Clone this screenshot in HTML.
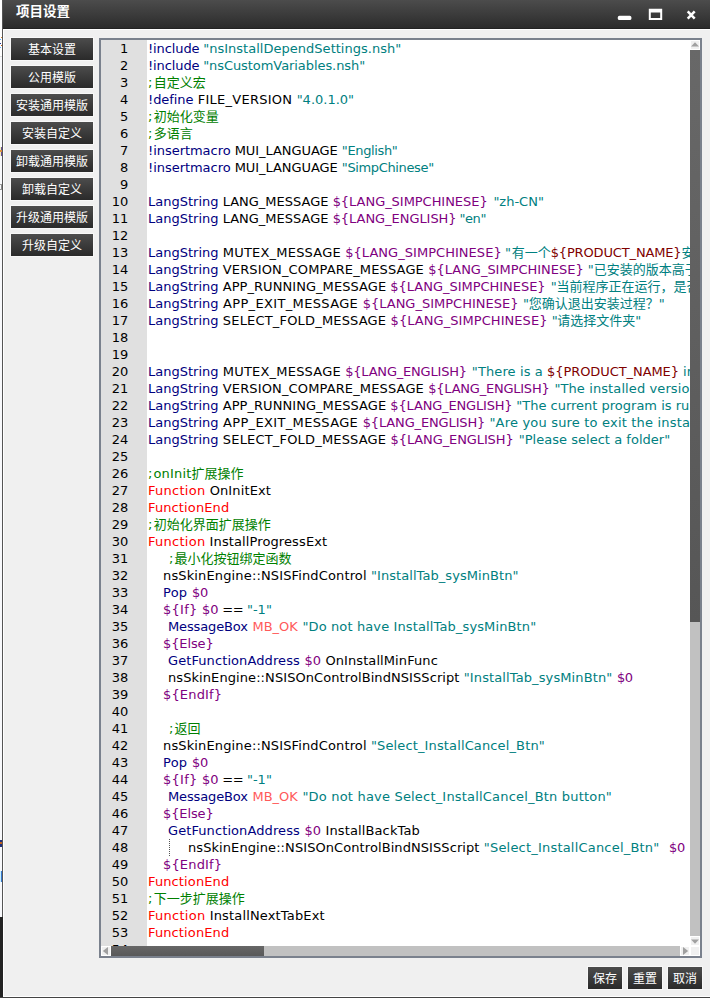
<!DOCTYPE html>
<html lang="zh-CN"><head><meta charset="utf-8"><title>项目设置</title>
<style>
html,body{margin:0;padding:0}
body{width:710px;height:998px;overflow:hidden;background:#f0f0f0;position:relative;font-family:"DejaVu Sans","Liberation Sans","Noto Sans CJK SC",sans-serif}
.abs{position:absolute}
#title{left:3px;top:0;width:707px;height:29px;background:linear-gradient(#4c4c4c,#2c2c2c 95%,#1e1e1e)}
#title .t{position:absolute;left:13px;top:2px;font:bold 13.5px/20px "Liberation Sans","Noto Sans CJK SC",sans-serif;color:#fff}
.sb{position:absolute;left:11px;width:82px;height:22px;background:linear-gradient(#4c4c4c,#2a2a2a);box-shadow:0 0 0 1px #f8f8f8;color:#fff;font:400 12px/24px "Liberation Sans","Noto Sans CJK SC",sans-serif;text-align:center;overflow:hidden}
.bb{position:absolute;top:967px;width:34px;height:22px;background:linear-gradient(#4c4c4c,#2a2a2a);box-shadow:0 0 0 1px #f8f8f8;color:#fff;font:400 12px/24px "Liberation Sans","Noto Sans CJK SC",sans-serif;text-align:center;overflow:hidden}
#ed{left:99px;top:38px;width:599px;height:916px;border:2px solid #7a818d;background:#fff;overflow:hidden}
#gut{left:0;top:0;width:46px;height:906px;background:#e0e0e0}
#code{left:0;top:0;width:589px;height:906px;overflow:hidden}
.l{position:absolute;left:0;height:17px;font-size:13px;line-height:17px;white-space:pre;color:#000}
.l .cj{font-family:"Noto Sans CJK SC",sans-serif;font-size:13px;line-height:0}
.n{position:absolute;left:0;width:27.4px;text-align:right;height:17px;font-size:13px;line-height:17px;color:#000}
.sbtn{width:10px;height:10px;box-sizing:border-box;background:#f0f0f0;border:1px solid #fff}
.k{color:#000080}.s{color:#008080}.v{color:#800080}.r{color:#800000}.f{color:#ff0000}.c{color:#008000}.m{color:#ff5a5a}
</style></head>
<body>
<div class="abs" style="left:0;top:0;width:2px;height:917px;background:#fff"></div>
<div class="abs" style="left:0;top:57px;width:2px;height:860px;background:#f8f9fc"></div>
<div class="abs" style="left:2px;top:0;width:1px;height:917px;background:#555"></div>
<div class="abs" style="left:0;top:917px;width:3px;height:81px;background:#232323"></div>
<div class="abs" style="left:1px;top:37px;width:1px;height:1px;background:#d08030"></div>
<div class="abs" style="left:0px;top:39px;width:1px;height:1px;background:#60b0ff"></div>
<div class="abs" style="left:0px;top:43px;width:1px;height:1px;background:#203090"></div>
<div class="abs" style="left:1px;top:45px;width:1px;height:1px;background:#c06020"></div>
<div class="abs" style="left:0px;top:47px;width:1px;height:1px;background:#60b0ff"></div>
<div class="abs" style="left:0px;top:56px;width:2px;height:1px;background:#ddd"></div>
<div class="abs" style="left:0px;top:147px;width:1px;height:9px;background:#f2f0b0"></div>
<div class="abs" style="left:1px;top:147px;width:1px;height:9px;background:#6a4fa0"></div>
<div class="abs" style="left:0px;top:150px;width:2px;height:2px;background:#e09040"></div>
<div class="abs" style="left:0px;top:184px;width:2px;height:1px;background:#999"></div>
<div class="abs" style="left:1px;top:185px;width:1px;height:4px;background:#8a8a8a"></div>
<div class="abs" style="left:0px;top:189px;width:2px;height:1px;background:#999"></div>
<div class="abs" style="left:0px;top:840px;width:2px;height:7px;background:#20307a"></div>
<div class="abs" style="left:0px;top:842px;width:2px;height:2px;background:#c06020"></div>
<div class="abs" style="left:0px;top:871px;width:2px;height:11px;background:#c8f0ff"></div>
<div class="abs" style="left:1px;top:871px;width:1px;height:11px;background:#3a7ad0"></div>
<div class="abs" style="left:3px;top:29px;width:1px;height:968px;background:#fff"></div>
<div class="abs" style="left:3px;top:29px;width:707px;height:1px;background:#fff"></div>
<div class="abs" style="left:3px;top:996px;width:707px;height:1px;background:#fff"></div>
<div class="abs" style="left:0;top:997px;width:710px;height:1px;background:#444"></div>
<div id="title" class="abs"><span class="t">项目设置</span>
<svg class="abs" style="left:0;top:0" width="707" height="28" viewBox="3 0 707 28"><rect x="617.8" y="15.8" width="13.6" height="4.2" rx="1.6" fill="#fff"/><path fill="#fff" fill-rule="evenodd" d="M648.8 8.8h13.4v11.2h-13.4z M650.8 12.6h9.4v5.3h-9.4z"/><path d="M687.7 11.4 L694.7 18.6 M694.7 11.4 L687.7 18.6" stroke="#fff" stroke-width="2.5" fill="none"/></svg></div>
<div class="sb" style="top:38px">基本设置</div>
<div class="sb" style="top:66px">公用模版</div>
<div class="sb" style="top:94px">安装通用模版</div>
<div class="sb" style="top:122px">安装自定义</div>
<div class="sb" style="top:150px">卸载通用模版</div>
<div class="sb" style="top:178px">卸载自定义</div>
<div class="sb" style="top:206px">升级通用模版</div>
<div class="sb" style="top:234px">升级自定义</div>
<div id="ed" class="abs">
<div id="gut" class="abs"></div>
<div id="code" class="abs">
<div class="n" style="top:0px">1</div><div class="l" style="top:0px;left:47px"><span class="k"><span style="letter-spacing:-0.10px">!include</span></span><span style="letter-spacing:-0.50px"> </span><span class="s"><span style="letter-spacing:0.02px">"nsInstallDependSettings.nsh"</span></span></div>
<div class="n" style="top:17px">2</div><div class="l" style="top:17px;left:47px"><span class="k"><span style="letter-spacing:-0.10px">!include</span></span><span style="letter-spacing:-0.50px"> </span><span class="s"><span style="letter-spacing:-0.07px">"nsCustomVariables.nsh"</span></span></div>
<div class="n" style="top:34px">3</div><div class="l" style="top:34px;left:47px"><span class="c"><span style="letter-spacing:1.30px">;</span></span><span class="c"><span class="cj">自定义宏</span></span></div>
<div class="n" style="top:51px">4</div><div class="l" style="top:51px;left:47px"><span class="k"><span style="letter-spacing:-0.07px">!define</span></span><span style="letter-spacing:0.25px"> FILE_VERSION </span><span class="s">"4.0.1.0"</span></div>
<div class="n" style="top:68px">5</div><div class="l" style="top:68px;left:47px"><span class="c"><span style="letter-spacing:1.30px">;</span></span><span class="c"><span class="cj">初始化变量</span></span></div>
<div class="n" style="top:85px">6</div><div class="l" style="top:85px;left:47px"><span class="c"><span style="letter-spacing:1.30px">;</span></span><span class="c"><span class="cj">多语言</span></span></div>
<div class="n" style="top:102px">7</div><div class="l" style="top:102px;left:47px"><span class="k"><span style="letter-spacing:-0.04px">!insertmacro</span></span><span style="letter-spacing:-0.06px"> MUI_LANGUAGE </span><span class="s"><span style="letter-spacing:-0.36px">"English"</span></span></div>
<div class="n" style="top:119px">8</div><div class="l" style="top:119px;left:47px"><span class="k"><span style="letter-spacing:-0.04px">!insertmacro</span></span><span style="letter-spacing:-0.06px"> MUI_LANGUAGE </span><span class="s"><span style="letter-spacing:-0.36px">"SimpChinese"</span></span></div>
<div class="n" style="top:136px">9</div>
<div class="n" style="top:153px">10</div><div class="l" style="top:153px;left:47px"><span class="k">LangString</span> LANG_MESSAGE <span class="v"><span style="letter-spacing:-0.04px">${LANG_SIMPCHINESE}</span></span><span style="letter-spacing:1.60px"> </span><span class="s">"zh-CN"</span></div>
<div class="n" style="top:170px">11</div><div class="l" style="top:170px;left:47px"><span class="k">LangString</span> LANG_MESSAGE <span class="v"><span style="letter-spacing:-0.05px">${LANG_ENGLISH}</span></span><span style="letter-spacing:-1.30px"> </span><span class="s"><span style="letter-spacing:-0.38px">"en"</span></span></div>
<div class="n" style="top:187px">12</div>
<div class="n" style="top:204px">13</div><div class="l" style="top:204px;left:47px"><span class="k">LangString</span><span style="letter-spacing:0.20px"> MUTEX_MESSAGE </span><span class="v"><span style="letter-spacing:0.04px">${LANG_SIMPCHINESE}</span></span><span style="letter-spacing:-0.80px"> </span><span class="s"><span style="letter-spacing:0.60px">"</span><span class="cj">有一个</span></span><span class="r"><span style="letter-spacing:-0.15px">${PRODUCT_NAME}</span></span><span class="s"><span class="cj">安</span></span></div>
<div class="n" style="top:221px">14</div><div class="l" style="top:221px;left:47px"><span class="k">LangString</span><span style="letter-spacing:0.14px"> VERSION_COMPARE_MESSAGE </span><span class="v"><span style="letter-spacing:-0.02px">${LANG_SIMPCHINESE}</span></span> <span class="s">"<span class="cj">已安装的版本高于</span></span></div>
<div class="n" style="top:238px">15</div><div class="l" style="top:238px;left:47px"><span class="k">LangString</span><span style="letter-spacing:0.06px"> APP_RUNNING_MESSAGE </span><span class="v"><span style="letter-spacing:-0.03px">${LANG_SIMPCHINESE}</span></span><span style="letter-spacing:0.90px"> </span><span class="s">"<span class="cj">当前程序正在运行，是否</span></span></div>
<div class="n" style="top:255px">16</div><div class="l" style="top:255px;left:47px"><span class="k">LangString</span><span style="letter-spacing:0.35px"> APP_EXIT_MESSAGE </span><span class="v">${LANG_SIMPCHINESE}</span><span style="letter-spacing:0.50px"> </span><span class="s"><span style="letter-spacing:-0.25px">"</span><span class="cj">您确认退出安装过程？</span><span style="letter-spacing:-0.25px">"</span></span></div>
<div class="n" style="top:272px">17</div><div class="l" style="top:272px;left:47px"><span class="k">LangString</span><span style="letter-spacing:0.18px"> SELECT_FOLD_MESSAGE </span><span class="v"><span style="letter-spacing:0.06px">${LANG_SIMPCHINESE}</span></span> <span class="s"><span style="letter-spacing:-0.40px">"</span><span class="cj">请选择文件夹</span><span style="letter-spacing:-0.40px">"</span></span></div>
<div class="n" style="top:289px">18</div>
<div class="n" style="top:306px">19</div>
<div class="n" style="top:323px">20</div><div class="l" style="top:323px;left:47px"><span class="k">LangString</span><span style="letter-spacing:0.20px"> MUTEX_MESSAGE </span><span class="v"><span style="letter-spacing:-0.20px">${LANG_ENGLISH}</span></span><span style="letter-spacing:0.80px"> </span><span class="s"><span style="letter-spacing:0.11px">"There is a </span></span><span class="r"><span style="letter-spacing:-0.08px">${PRODUCT_NAME}</span></span><span class="s"> in</span></div>
<div class="n" style="top:340px">21</div><div class="l" style="top:340px;left:47px"><span class="k">LangString</span><span style="letter-spacing:0.14px"> VERSION_COMPARE_MESSAGE </span><span class="v"><span style="letter-spacing:-0.23px">${LANG_ENGLISH}</span></span><span style="letter-spacing:0.80px"> </span><span class="s"><span style="letter-spacing:0.10px">"The installed version</span></span></div>
<div class="n" style="top:357px">22</div><div class="l" style="top:357px;left:47px"><span class="k">LangString</span><span style="letter-spacing:0.06px"> APP_RUNNING_MESSAGE </span><span class="v"><span style="letter-spacing:-0.17px">${LANG_ENGLISH}</span></span><span style="letter-spacing:-0.40px"> </span><span class="s">"The current program is run</span></div>
<div class="n" style="top:374px">23</div><div class="l" style="top:374px;left:47px"><span class="k">LangString</span><span style="letter-spacing:0.35px"> APP_EXIT_MESSAGE </span><span class="v"><span style="letter-spacing:-0.14px">${LANG_ENGLISH}</span></span> <span class="s"><span style="letter-spacing:0.19px">"Are you sure to exit the install</span></span></div>
<div class="n" style="top:391px">24</div><div class="l" style="top:391px;left:47px"><span class="k">LangString</span><span style="letter-spacing:0.18px"> SELECT_FOLD_MESSAGE </span><span class="v"><span style="letter-spacing:-0.11px">${LANG_ENGLISH}</span></span><span style="letter-spacing:0.90px"> </span><span class="s"><span style="letter-spacing:0.03px">"Please select a folder"</span></span></div>
<div class="n" style="top:408px">25</div>
<div class="n" style="top:425px">26</div><div class="l" style="top:425px;left:47px"><span class="c"><span style="letter-spacing:1.00px">;</span></span><span class="c"><span style="letter-spacing:0.18px">onInit</span><span class="cj">扩展操作</span></span></div>
<div class="n" style="top:442px">27</div><div class="l" style="top:442px;left:47px"><span class="f"><span style="letter-spacing:0.26px">Function</span></span><span style="letter-spacing:0.13px"> OnInitExt</span></div>
<div class="n" style="top:459px">28</div><div class="l" style="top:459px;left:47px"><span class="f"><span style="letter-spacing:0.12px">FunctionEnd</span></span></div>
<div class="n" style="top:476px">29</div><div class="l" style="top:476px;left:47px"><span class="c"><span style="letter-spacing:1.30px">;</span></span><span class="c"><span class="cj">初始化界面扩展操作</span></span></div>
<div class="n" style="top:493px">30</div><div class="l" style="top:493px;left:47px"><span class="f"><span style="letter-spacing:0.26px">Function</span></span><span style="letter-spacing:0.11px"> InstallProgressExt</span></div>
<div class="n" style="top:510px">31</div><div class="l" style="top:510px;left:68px"><span class="c"><span style="letter-spacing:1.00px">;</span></span><span class="c"><span class="cj">最小化按钮绑定函数</span></span></div>
<div class="n" style="top:527px">32</div><div class="l" style="top:527px;left:62px"><span style="letter-spacing:0.14px">nsSkinEngine::NSISFindControl </span><span class="s"><span style="letter-spacing:0.06px">"InstallTab_sysMinBtn"</span></span></div>
<div class="n" style="top:544px">33</div><div class="l" style="top:544px;left:62px"><span class="k"><span style="letter-spacing:0.27px">Pop</span></span><span style="letter-spacing:0.50px"> </span><span class="v"><span style="letter-spacing:-0.25px">$0</span></span></div>
<div class="n" style="top:561px">34</div><div class="l" style="top:561px;left:62px"><span class="v"><span style="letter-spacing:0.26px">${If}</span></span><span style="letter-spacing:0.40px"> </span><span class="v"><span style="letter-spacing:-0.10px">$0</span></span><span style="letter-spacing:-0.38px"> == </span><span class="s">"-1"</span></div>
<div class="n" style="top:578px">35</div><div class="l" style="top:578px;left:67px"><span class="k"><span style="letter-spacing:-0.13px">MessageBox</span></span><span style="letter-spacing:0.50px"> </span><span class="m">MB_OK</span><span style="letter-spacing:0.40px"> </span><span class="s"><span style="letter-spacing:0.12px">"Do not have InstallTab_sysMinBtn"</span></span></div>
<div class="n" style="top:595px">36</div><div class="l" style="top:595px;left:62px"><span class="v"><span style="letter-spacing:-0.11px">${Else}</span></span></div>
<div class="n" style="top:612px">37</div><div class="l" style="top:612px;left:67px"><span class="k"><span style="letter-spacing:0.09px">GetFunctionAddress</span></span><span style="letter-spacing:0.40px"> </span><span class="v"><span style="letter-spacing:0.10px">$0</span></span><span style="letter-spacing:0.09px"> OnInstallMinFunc</span></div>
<div class="n" style="top:629px">38</div><div class="l" style="top:629px;left:67px"><span style="letter-spacing:0.08px">nsSkinEngine::NSISOnControlBindNSISScript </span><span class="s"><span style="letter-spacing:0.11px">"InstallTab_sysMinBtn"</span></span><span style="letter-spacing:0.40px"> </span><span class="v"><span style="letter-spacing:-0.40px">$0</span></span></div>
<div class="n" style="top:646px">39</div><div class="l" style="top:646px;left:62px"><span class="v"><span style="letter-spacing:0.16px">${EndIf}</span></span></div>
<div class="n" style="top:663px">40</div>
<div class="n" style="top:680px">41</div><div class="l" style="top:680px;left:68px"><span class="c"><span style="letter-spacing:1.00px">;</span></span><span class="c"><span class="cj">返回</span></span></div>
<div class="n" style="top:697px">42</div><div class="l" style="top:697px;left:62px"><span style="letter-spacing:0.14px">nsSkinEngine::NSISFindControl </span><span class="s"><span style="letter-spacing:0.13px">"Select_InstallCancel_Btn"</span></span></div>
<div class="n" style="top:714px">43</div><div class="l" style="top:714px;left:62px"><span class="k"><span style="letter-spacing:0.27px">Pop</span></span><span style="letter-spacing:0.50px"> </span><span class="v"><span style="letter-spacing:-0.25px">$0</span></span></div>
<div class="n" style="top:731px">44</div><div class="l" style="top:731px;left:62px"><span class="v"><span style="letter-spacing:0.26px">${If}</span></span><span style="letter-spacing:0.40px"> </span><span class="v"><span style="letter-spacing:-0.10px">$0</span></span><span style="letter-spacing:-0.38px"> == </span><span class="s">"-1"</span></div>
<div class="n" style="top:748px">45</div><div class="l" style="top:748px;left:67px"><span class="k"><span style="letter-spacing:-0.13px">MessageBox</span></span><span style="letter-spacing:0.50px"> </span><span class="m">MB_OK</span><span style="letter-spacing:0.40px"> </span><span class="s"><span style="letter-spacing:0.19px">"Do not have Select_InstallCancel_Btn button"</span></span></div>
<div class="n" style="top:765px">46</div><div class="l" style="top:765px;left:62px"><span class="v"><span style="letter-spacing:-0.11px">${Else}</span></span></div>
<div class="n" style="top:782px">47</div><div class="l" style="top:782px;left:67px"><span class="k"><span style="letter-spacing:0.09px">GetFunctionAddress</span></span><span style="letter-spacing:0.40px"> </span><span class="v"><span style="letter-spacing:0.10px">$0</span></span><span style="letter-spacing:0.13px"> InstallBackTab</span></div>
<div class="n" style="top:799px">48</div><div class="l" style="top:799px;left:87px"><span style="letter-spacing:0.08px">nsSkinEngine::NSISOnControlBindNSISScript </span><span class="s"><span style="letter-spacing:0.20px">"Select_InstallCancel_Btn"</span></span><span style="letter-spacing:0.65px">  </span><span class="v"><span style="letter-spacing:-0.40px">$0</span></span></div>
<div class="n" style="top:816px">49</div><div class="l" style="top:816px;left:62px"><span class="v"><span style="letter-spacing:0.16px">${EndIf}</span></span></div>
<div class="n" style="top:833px">50</div><div class="l" style="top:833px;left:47px"><span class="f"><span style="letter-spacing:0.12px">FunctionEnd</span></span></div>
<div class="n" style="top:850px">51</div><div class="l" style="top:850px;left:47px"><span class="c"><span style="letter-spacing:1.30px">;</span></span><span class="c"><span class="cj">下一步扩展操作</span></span></div>
<div class="n" style="top:867px">52</div><div class="l" style="top:867px;left:47px"><span class="f"><span style="letter-spacing:0.26px">Function</span></span><span style="letter-spacing:0.16px"> InstallNextTabExt</span></div>
<div class="n" style="top:884px">53</div><div class="l" style="top:884px;left:47px"><span class="f"><span style="letter-spacing:0.12px">FunctionEnd</span></span></div>
<div class="n" style="top:901px">54</div>
</div>
<div class="abs" style="left:68px;top:799px;width:0;height:17px;border-left:1px dotted #555"></div>
<div class="abs" style="left:589px;top:0;width:10px;height:906px;background:#c1c1c1"></div>
<div class="abs sbtn" style="left:589px;top:0"></div>
<div class="abs" style="left:589px;top:10px;width:10px;height:572px;background:linear-gradient(#686868,#565656)"></div>
<div class="abs sbtn" style="left:589px;top:896px"></div>
<div class="abs" style="left:0;top:906px;width:589px;height:10px;background:#c1c1c1"></div>
<div class="abs sbtn" style="left:0;top:906px"></div>
<div class="abs" style="left:10px;top:906px;width:153px;height:10px;background:linear-gradient(#676767,#595959)"></div>
<div class="abs sbtn" style="left:579px;top:906px"></div>
<div class="abs sbtn" style="left:589px;top:906px"></div>
<svg class="abs" style="left:0;top:0" width="599" height="916"><g fill="#a0a0a0"><path d="M590 6.6 L594 2.2 L598 6.6Z"/><path d="M590 899.4 L594 903.8 L598 899.4Z"/><path d="M7 907 L1.8 911 L7 915Z"/><path d="M582 907 L587.2 911 L582 915Z"/></g></svg>
</div>
<div class="bb" style="left:588px">保存</div>
<div class="bb" style="left:628px">重置</div>
<div class="bb" style="left:668px">取消</div>
</body></html>
